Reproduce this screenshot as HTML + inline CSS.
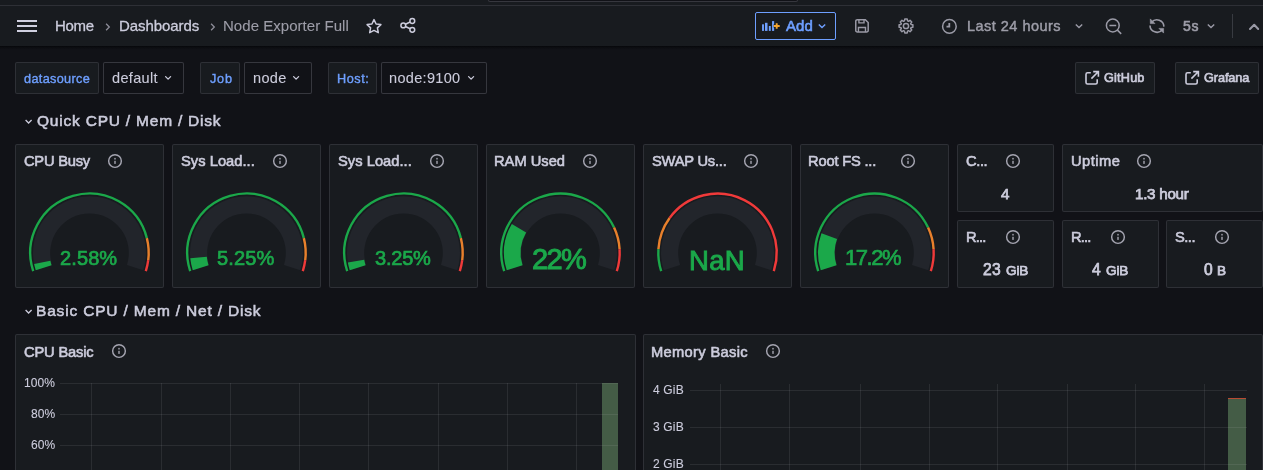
<!DOCTYPE html><html><head><meta charset="utf-8"><style>
*{box-sizing:border-box;margin:0;padding:0}
html,body{width:1263px;height:470px;overflow:hidden;background:#111217;font-family:"Liberation Sans",sans-serif;color:#ccccdc}
.a{position:absolute}
.t{position:absolute;white-space:nowrap;line-height:1;will-change:transform}
</style></head><body>
<div class="a" style="left:0;top:0;width:1263px;height:46px;background:#181b1f"></div>
<div class="a" style="left:0;top:46px;width:1263px;height:4px;background:linear-gradient(#06070a,#0c0d11 40%,#111217)"></div>
<div class="a" style="left:488px;top:-6px;width:310px;height:8px;background:#111217;border:1px solid rgba(204,204,220,0.2);border-radius:2px"></div>
<div class="a" style="left:0;top:5px;width:1263px;height:1px;background:rgba(204,204,220,0.12)"></div>
<div class="a" style="left:17px;top:20px;width:20px;height:2px;background:#d0d0e0"></div>
<div class="a" style="left:17px;top:25px;width:20px;height:2px;background:#d0d0e0"></div>
<div class="a" style="left:17px;top:30px;width:20px;height:2px;background:#d0d0e0"></div>
<div class="t" id="home" style="left:54.96px;top:17.80px;font-size:15px;letter-spacing:-0.320px;color:#ccccdc;font-weight:normal;-webkit-text-stroke:0.3px #ccccdc;">Home</div>
<div class="t" id="dash" style="left:118.62px;top:18.30px;font-size:15px;letter-spacing:-0.079px;color:#ccccdc;font-weight:normal;-webkit-text-stroke:0.3px #ccccdc;">Dashboards</div>
<div class="t" id="nef" style="left:222.62px;top:18.30px;font-size:15px;letter-spacing:0.039px;color:#9d9da8;font-weight:normal;-webkit-text-stroke:0.1px #9d9da8;">Node Exporter Full</div>
<svg class="a" style="left:103.5px;top:22px" width="8" height="10" viewBox="0 0 8 10"><path d="M2.1 1.8L5.3 5L2.1 8.2" stroke="#8e8e9a" stroke-width="1.3" fill="none"/></svg>
<svg class="a" style="left:208.5px;top:22px" width="8" height="10" viewBox="0 0 8 10"><path d="M2.1 1.8L5.3 5L2.1 8.2" stroke="#8e8e9a" stroke-width="1.3" fill="none"/></svg>
<svg class="a" style="left:365px;top:18px" width="18" height="17" viewBox="0 0 18 17"><path d="M9 1.6L11.1 6L15.9 6.6L12.4 9.9L13.3 14.7L9 12.4L4.7 14.7L5.6 9.9L2.1 6.6L6.9 6Z" stroke="#ccccdc" stroke-width="1.5" fill="none" stroke-linejoin="round"/></svg>
<svg class="a" style="left:398.9px;top:16.9px" width="18" height="17" viewBox="0 0 18 17"><circle cx="13.3" cy="4" r="2.4" stroke="#ccccdc" stroke-width="1.5" fill="none"/><circle cx="4.3" cy="8.4" r="2.4" stroke="#ccccdc" stroke-width="1.5" fill="none"/><circle cx="13.3" cy="12.8" r="2.4" stroke="#ccccdc" stroke-width="1.5" fill="none"/><path d="M6.4 7.3L11.2 5M6.4 9.5L11.2 11.8" stroke="#ccccdc" stroke-width="1.5"/></svg>
<div class="a" style="left:755px;top:12px;width:81px;height:28px;border:1px solid #6e9fff;border-radius:2px"></div>
<svg class="a" style="left:761px;top:19px" width="20" height="14" viewBox="0 0 20 14"><rect x="1.05" y="5.3" width="1.9" height="6.6" fill="#6e9fff"/><rect x="4.0" y="3.8" width="2.5" height="8.1" fill="#6e9fff"/><rect x="7.85" y="7" width="1.9" height="4.9" fill="#6e9fff"/><rect x="11.05" y="2.1" width="2.1" height="9.8" fill="#6e9fff"/><path d="M15.7 4.2V9.8M12.7 7H18.7" stroke="#181b1f" stroke-width="3.4"/><path d="M15.7 4.2V9.8M12.7 7H18.7" stroke="#f5a530" stroke-width="1.9"/></svg>
<div class="t" id="add" style="left:786.00px;top:18.30px;font-size:15px;letter-spacing:0.050px;color:#6e9fff;font-weight:normal;-webkit-text-stroke:0.6px #6e9fff;">Add</div>
<svg class="a" style="left:817px;top:22px" width="10" height="8" viewBox="0 0 10 8"><path d="M1.8 2.4L5 5.6L8.2 2.4" stroke="#6e9fff" stroke-width="1.4" fill="none"/></svg>
<svg class="a" style="left:854px;top:18.3px" width="16.7" height="15.8" viewBox="0 0 18 17"><path d="M3.6 1.8H12.2L15.3 4.9V13.4A1.7 1.7 0 0 1 13.6 15.1H3.6A1.7 1.7 0 0 1 1.9 13.4V3.5A1.7 1.7 0 0 1 3.6 1.8Z" stroke="#9a9aa6" stroke-width="1.6" fill="none"/><path d="M5.3 1.8V5.2H10.8V1.8M4.8 15.1V10.2H12.4V15.1" stroke="#9a9aa6" stroke-width="1.5" fill="none"/></svg>
<svg class="a" style="left:897px;top:17px" width="18" height="18" viewBox="0 0 18 18"><path d="M15.89 7.78 L15.89 10.22 L14.07 10.55 L13.68 11.49 L14.73 13.02 L13.02 14.73 L11.49 13.68 L10.55 14.07 L10.22 15.89 L7.78 15.89 L7.45 14.07 L6.51 13.68 L4.98 14.73 L3.27 13.02 L4.32 11.49 L3.93 10.55 L2.11 10.22 L2.11 7.78 L3.93 7.45 L4.32 6.51 L3.27 4.98 L4.98 3.27 L6.51 4.32 L7.45 3.93 L7.78 2.11 L10.22 2.11 L10.55 3.93 L11.49 4.32 L13.02 3.27 L14.73 4.98 L13.68 6.51 L14.07 7.45Z" stroke="#9a9aa6" stroke-width="1.5" fill="none" stroke-linejoin="round"/><circle cx="9" cy="9" r="2.6" stroke="#9a9aa6" stroke-width="1.5" fill="none"/></svg>
<svg class="a" style="left:941.2px;top:17.9px" width="17" height="17" viewBox="0 0 17 17"><circle cx="8.4" cy="8.4" r="6.8" stroke="#9a9aa6" stroke-width="1.5" fill="none"/><path d="M8.3 4.9V8.7H5.5" stroke="#9a9aa6" stroke-width="1.8" fill="none"/></svg>
<div class="t" id="last" style="left:966.98px;top:18.63px;font-size:14.5px;letter-spacing:0.475px;color:#9d9da8;font-weight:normal;-webkit-text-stroke:0.45px #9d9da8;">Last 24 hours</div>
<svg class="a" style="left:1074px;top:22px" width="10" height="8" viewBox="0 0 10 8"><path d="M1.8 2.4L5 5.6L8.2 2.4" stroke="#9a9aa6" stroke-width="1.4" fill="none"/></svg>
<svg class="a" style="left:1104.5px;top:17.5px" width="18" height="17" viewBox="0 0 18 17"><circle cx="7.8" cy="7.5" r="6.4" stroke="#9a9aa6" stroke-width="1.5" fill="none"/><path d="M12.4 12.1L16.2 15.9M4.4 7.5H11.2" stroke="#9a9aa6" stroke-width="1.5"/></svg>
<svg class="a" style="left:1148px;top:18px" width="18" height="17" viewBox="0 0 18 17"><path d="M3.6 4.3A7 7 0 0 1 15.93 8.61M14.4 11.7A7 7 0 0 1 2.0 7.4" stroke="#9a9aa6" stroke-width="1.6" fill="none"/><path d="M2.3 0.9V5.6H7Z M15.6 15.1V10.4H10.9Z" fill="#9a9aa6" stroke="#9a9aa6" stroke-width="0.6" stroke-linejoin="round"/></svg>
<div class="t" id="5s" style="left:1182.83px;top:18.75px;font-size:14px;letter-spacing:0.710px;color:#9d9da8;font-weight:normal;-webkit-text-stroke:0.6px #9d9da8;">5s</div>
<svg class="a" style="left:1206px;top:22px" width="10" height="8" viewBox="0 0 10 8"><path d="M1.8 2.4L5 5.6L8.2 2.4" stroke="#9a9aa6" stroke-width="1.4" fill="none"/></svg>
<div class="a" style="left:1232px;top:14px;width:1px;height:24px;background:rgba(204,204,220,0.18)"></div>
<svg class="a" style="left:1245px;top:20px" width="18" height="14" viewBox="0 0 18 14"><path d="M5 9L9.2 4.8L13.2 9" stroke="#9a9aa6" stroke-width="2" fill="none" stroke-linecap="round" stroke-linejoin="round"/></svg>
<div class="a" style="left:15px;top:62px;width:84px;height:32px;background:#181b1f;border:1px solid rgba(204,204,220,0.12);border-radius:2px"></div>
<div class="t" id="ds" style="left:24.17px;top:72.65px;font-size:12.7px;letter-spacing:0.331px;color:#6e9fff;font-weight:normal;-webkit-text-stroke:0.4px #6e9fff;">datasource</div>
<div class="a" style="left:103px;top:62px;width:81px;height:32px;background:#111217;border:1px solid rgba(204,204,220,0.2);border-radius:2px"></div>
<div class="t" id="def" style="left:112.49px;top:70.53px;font-size:14.5px;letter-spacing:0.323px;color:#ccccdc;font-weight:normal;-webkit-text-stroke:0.1px #ccccdc;">default</div>
<svg class="a" style="left:164.2px;top:75px" width="9" height="6" viewBox="0 0 9 6"><path d="M1.6 1.6L4.1 4.1L6.6 1.6" stroke="#ccccdc" stroke-width="1.3" fill="none" stroke-linecap="round" stroke-linejoin="round"/></svg>
<div class="a" style="left:200px;top:62px;width:40px;height:32px;background:#181b1f;border:1px solid rgba(204,204,220,0.12);border-radius:2px"></div>
<div class="t" id="job" style="left:209.68px;top:72.65px;font-size:12.7px;letter-spacing:0.760px;color:#6e9fff;font-weight:normal;-webkit-text-stroke:0.4px #6e9fff;">Job</div>
<div class="a" style="left:244px;top:62px;width:68px;height:32px;background:#111217;border:1px solid rgba(204,204,220,0.2);border-radius:2px"></div>
<div class="t" id="node" style="left:252.96px;top:70.83px;font-size:14.5px;letter-spacing:0.313px;color:#ccccdc;font-weight:normal;-webkit-text-stroke:0.1px #ccccdc;">node</div>
<svg class="a" style="left:291.8px;top:75px" width="9" height="6" viewBox="0 0 9 6"><path d="M1.6 1.6L4.1 4.1L6.6 1.6" stroke="#ccccdc" stroke-width="1.3" fill="none" stroke-linecap="round" stroke-linejoin="round"/></svg>
<div class="a" style="left:328px;top:62px;width:49px;height:32px;background:#181b1f;border:1px solid rgba(204,204,220,0.12);border-radius:2px"></div>
<div class="t" id="host" style="left:336.81px;top:72.65px;font-size:12.7px;letter-spacing:0.560px;color:#6e9fff;font-weight:normal;-webkit-text-stroke:0.4px #6e9fff;">Host:</div>
<div class="a" style="left:381px;top:62px;width:106px;height:32px;background:#111217;border:1px solid rgba(204,204,220,0.2);border-radius:2px"></div>
<div class="t" id="node9" style="left:389.45px;top:70.83px;font-size:14.5px;letter-spacing:0.330px;color:#ccccdc;font-weight:normal;-webkit-text-stroke:0.1px #ccccdc;">node:9100</div>
<svg class="a" style="left:467.2px;top:75px" width="9" height="6" viewBox="0 0 9 6"><path d="M1.6 1.6L4.1 4.1L6.6 1.6" stroke="#ccccdc" stroke-width="1.3" fill="none" stroke-linecap="round" stroke-linejoin="round"/></svg>
<div class="a" style="left:1075px;top:62px;width:80px;height:32px;background:#181b1f;border:1px solid rgba(204,204,220,0.12);border-radius:2px"></div>
<svg class="a" style="left:1084px;top:70px" width="16" height="16" viewBox="0 0 16 16"><path d="M6.8 2.8H3.6A1.6 1.6 0 0 0 2 4.4V12.4A1.6 1.6 0 0 0 3.6 14H11.6A1.6 1.6 0 0 0 13.2 12.4V9.2" stroke="#ccccdc" stroke-width="1.6" fill="none"/><path d="M9.2 1.6H14.4V6.8M14.2 1.8L7.4 8.6" stroke="#ccccdc" stroke-width="1.6" fill="none"/></svg>
<div class="t" id="gh" style="left:1104.34px;top:71.85px;font-size:12.7px;letter-spacing:0.188px;color:#ccccdc;font-weight:normal;-webkit-text-stroke:0.65px #ccccdc;">GitHub</div>
<div class="a" style="left:1175px;top:62px;width:84px;height:32px;background:#181b1f;border:1px solid rgba(204,204,220,0.12);border-radius:2px"></div>
<svg class="a" style="left:1184px;top:70px" width="16" height="16" viewBox="0 0 16 16"><path d="M6.8 2.8H3.6A1.6 1.6 0 0 0 2 4.4V12.4A1.6 1.6 0 0 0 3.6 14H11.6A1.6 1.6 0 0 0 13.2 12.4V9.2" stroke="#ccccdc" stroke-width="1.6" fill="none"/><path d="M9.2 1.6H14.4V6.8M14.2 1.8L7.4 8.6" stroke="#ccccdc" stroke-width="1.6" fill="none"/></svg>
<div class="t" id="gf" style="left:1203.90px;top:71.85px;font-size:12.7px;letter-spacing:-0.075px;color:#ccccdc;font-weight:normal;-webkit-text-stroke:0.65px #ccccdc;">Grafana</div>
<svg class="a" style="left:23.8px;top:117.5px" width="10" height="8" viewBox="0 0 10 8"><path d="M1.6 2L4.6 5L7.6 2" stroke="#ccccdc" stroke-width="1.3" fill="none"/></svg>
<div class="t" id="row1" style="left:37.15px;top:113.48px;font-size:15.5px;letter-spacing:0.788px;color:#ccccdc;font-weight:normal;-webkit-text-stroke:0.55px #ccccdc;">Quick CPU / Mem / Disk</div>
<svg class="a" style="left:23.8px;top:307.5px" width="10" height="8" viewBox="0 0 10 8"><path d="M1.6 2L4.6 5L7.6 2" stroke="#ccccdc" stroke-width="1.3" fill="none"/></svg>
<div class="t" id="row2" style="left:36.45px;top:303.48px;font-size:15.5px;letter-spacing:0.823px;color:#ccccdc;font-weight:normal;-webkit-text-stroke:0.55px #ccccdc;">Basic CPU / Mem / Net / Disk</div>
<div class="a" style="left:15px;top:144px;width:149px;height:144px;background:#181b1f;border:1px solid rgba(204,204,220,0.12);border-radius:2px"></div>
<div class="t" id="g1t" style="left:24.15px;top:153.56px;font-size:14.7px;letter-spacing:-0.236px;color:#ccccdc;font-weight:normal;-webkit-text-stroke:0.6px #ccccdc;">CPU Busy</div>
<svg class="a" style="left:107px;top:153px" width="16" height="16" viewBox="0 0 16 16"><circle cx="8" cy="8" r="6.35" stroke="#a5a5b1" stroke-width="1.45" fill="none"/><rect x="7.3" y="7.8" width="1.4" height="3.1" fill="#a5a5b1"/><rect x="7.3" y="4.9" width="1.4" height="1.6" fill="#a5a5b1"/></svg>
<svg class="a" style="left:14px;top:143px" width="151" height="146" viewBox="0 0 151 146"><path d="M19.20 128.09A59.2 59.2 0 1 1 132.84 95.08" stroke="#1ba84a" stroke-width="2.4" fill="none"/><path d="M132.84 95.08A59.2 59.2 0 0 1 134.23 117.22" stroke="#e8802c" stroke-width="2.4" fill="none"/><path d="M134.23 117.22A59.2 59.2 0 0 1 131.80 128.09" stroke="#f03a3a" stroke-width="2.4" fill="none"/><path d="M21.77 127.26A56.5 56.5 0 1 1 129.23 127.26L112.88 121.94A39.3 39.3 0 1 0 38.12 121.94Z" fill="#22252b"/><path d="M21.77 127.26A56.5 56.5 0 0 1 20.12 120.99L36.39 117.71A39.9 39.9 0 0 0 37.55 122.13Z" fill="#1ba84a"/></svg>
<div class="t" id="g1v" style="left:59.96px;top:248.07px;font-size:20px;letter-spacing:0.108px;color:#1ba84a;font-weight:normal;-webkit-text-stroke:0.7px #1ba84a;">2.58%</div>
<div class="a" style="left:172px;top:144px;width:149px;height:144px;background:#181b1f;border:1px solid rgba(204,204,220,0.12);border-radius:2px"></div>
<div class="t" id="g2t" style="left:181.15px;top:153.56px;font-size:14.7px;letter-spacing:0.032px;color:#ccccdc;font-weight:normal;-webkit-text-stroke:0.6px #ccccdc;">Sys Load...</div>
<svg class="a" style="left:272.1px;top:153px" width="16" height="16" viewBox="0 0 16 16"><circle cx="8" cy="8" r="6.35" stroke="#a5a5b1" stroke-width="1.45" fill="none"/><rect x="7.3" y="7.8" width="1.4" height="3.1" fill="#a5a5b1"/><rect x="7.3" y="4.9" width="1.4" height="1.6" fill="#a5a5b1"/></svg>
<svg class="a" style="left:171px;top:143px" width="151" height="146" viewBox="0 0 151 146"><path d="M19.20 128.09A59.2 59.2 0 1 1 132.84 95.08" stroke="#1ba84a" stroke-width="2.4" fill="none"/><path d="M132.84 95.08A59.2 59.2 0 0 1 134.23 117.22" stroke="#e8802c" stroke-width="2.4" fill="none"/><path d="M134.23 117.22A59.2 59.2 0 0 1 131.80 128.09" stroke="#f03a3a" stroke-width="2.4" fill="none"/><path d="M21.77 127.26A56.5 56.5 0 1 1 129.23 127.26L112.88 121.94A39.3 39.3 0 1 0 38.12 121.94Z" fill="#22252b"/><path d="M21.77 127.26A56.5 56.5 0 0 1 19.28 115.37L35.79 113.74A39.9 39.9 0 0 0 37.55 122.13Z" fill="#1ba84a"/></svg>
<div class="t" id="g2v" style="left:216.87px;top:248.07px;font-size:20px;letter-spacing:0.130px;color:#1ba84a;font-weight:normal;-webkit-text-stroke:0.7px #1ba84a;">5.25%</div>
<div class="a" style="left:329px;top:144px;width:149px;height:144px;background:#181b1f;border:1px solid rgba(204,204,220,0.12);border-radius:2px"></div>
<div class="t" id="g3t" style="left:338.15px;top:153.56px;font-size:14.7px;letter-spacing:0.032px;color:#ccccdc;font-weight:normal;-webkit-text-stroke:0.6px #ccccdc;">Sys Load...</div>
<svg class="a" style="left:429.1px;top:153px" width="16" height="16" viewBox="0 0 16 16"><circle cx="8" cy="8" r="6.35" stroke="#a5a5b1" stroke-width="1.45" fill="none"/><rect x="7.3" y="7.8" width="1.4" height="3.1" fill="#a5a5b1"/><rect x="7.3" y="4.9" width="1.4" height="1.6" fill="#a5a5b1"/></svg>
<svg class="a" style="left:328px;top:143px" width="151" height="146" viewBox="0 0 151 146"><path d="M19.20 128.09A59.2 59.2 0 1 1 132.84 95.08" stroke="#1ba84a" stroke-width="2.4" fill="none"/><path d="M132.84 95.08A59.2 59.2 0 0 1 134.23 117.22" stroke="#e8802c" stroke-width="2.4" fill="none"/><path d="M134.23 117.22A59.2 59.2 0 0 1 131.80 128.09" stroke="#f03a3a" stroke-width="2.4" fill="none"/><path d="M21.77 127.26A56.5 56.5 0 1 1 129.23 127.26L112.88 121.94A39.3 39.3 0 1 0 38.12 121.94Z" fill="#22252b"/><path d="M21.77 127.26A56.5 56.5 0 0 1 19.85 119.59L36.20 116.71A39.9 39.9 0 0 0 37.55 122.13Z" fill="#1ba84a"/></svg>
<div class="t" id="g3v" style="left:375.17px;top:248.07px;font-size:20px;letter-spacing:-0.225px;color:#1ba84a;font-weight:normal;-webkit-text-stroke:0.7px #1ba84a;">3.25%</div>
<div class="a" style="left:486px;top:144px;width:149px;height:144px;background:#181b1f;border:1px solid rgba(204,204,220,0.12);border-radius:2px"></div>
<div class="t" id="g4t" style="left:494.45px;top:153.56px;font-size:14.7px;letter-spacing:-0.001px;color:#ccccdc;font-weight:normal;-webkit-text-stroke:0.6px #ccccdc;">RAM Used</div>
<svg class="a" style="left:582px;top:153px" width="16" height="16" viewBox="0 0 16 16"><circle cx="8" cy="8" r="6.35" stroke="#a5a5b1" stroke-width="1.45" fill="none"/><rect x="7.3" y="7.8" width="1.4" height="3.1" fill="#a5a5b1"/><rect x="7.3" y="4.9" width="1.4" height="1.6" fill="#a5a5b1"/></svg>
<svg class="a" style="left:485px;top:143px" width="151" height="146" viewBox="0 0 151 146"><path d="M19.20 128.09A59.2 59.2 0 0 1 129.07 84.59" stroke="#1ba84a" stroke-width="2.4" fill="none"/><path d="M129.07 84.59A59.2 59.2 0 0 1 134.58 106.08" stroke="#e8802c" stroke-width="2.4" fill="none"/><path d="M134.58 106.08A59.2 59.2 0 0 1 131.80 128.09" stroke="#f03a3a" stroke-width="2.4" fill="none"/><path d="M21.77 127.26A56.5 56.5 0 1 1 129.23 127.26L112.88 121.94A39.3 39.3 0 1 0 38.12 121.94Z" fill="#22252b"/><path d="M21.77 127.26A56.5 56.5 0 0 1 26.83 81.11L41.13 89.54A39.9 39.9 0 0 0 37.55 122.13Z" fill="#1ba84a"/></svg>
<div class="t" id="g4v" style="left:531.80px;top:244.65px;font-size:29px;letter-spacing:-1.605px;color:#1ba84a;font-weight:normal;-webkit-text-stroke:0.95px #1ba84a;">22%</div>
<div class="a" style="left:643px;top:144px;width:149px;height:144px;background:#181b1f;border:1px solid rgba(204,204,220,0.12);border-radius:2px"></div>
<div class="t" id="g5t" style="left:652.15px;top:153.56px;font-size:14.7px;letter-spacing:-0.214px;color:#ccccdc;font-weight:normal;-webkit-text-stroke:0.6px #ccccdc;">SWAP Us...</div>
<svg class="a" style="left:742.8px;top:153px" width="16" height="16" viewBox="0 0 16 16"><circle cx="8" cy="8" r="6.35" stroke="#a5a5b1" stroke-width="1.45" fill="none"/><rect x="7.3" y="7.8" width="1.4" height="3.1" fill="#a5a5b1"/><rect x="7.3" y="4.9" width="1.4" height="1.6" fill="#a5a5b1"/></svg>
<svg class="a" style="left:642px;top:143px" width="151" height="146" viewBox="0 0 151 146"><path d="M19.20 128.09A59.2 59.2 0 0 1 16.42 106.08" stroke="#1ba84a" stroke-width="2.4" fill="none"/><path d="M16.42 106.08A59.2 59.2 0 0 1 27.61 75.00" stroke="#e8802c" stroke-width="2.4" fill="none"/><path d="M27.61 75.00A59.2 59.2 0 0 1 131.80 128.09" stroke="#f03a3a" stroke-width="2.4" fill="none"/><path d="M21.77 127.26A56.5 56.5 0 1 1 129.23 127.26L112.88 121.94A39.3 39.3 0 1 0 38.12 121.94Z" fill="#22252b"/></svg>
<div class="t" id="g5v" style="left:689.16px;top:246.52px;font-size:27.5px;letter-spacing:0.340px;color:#1ba84a;font-weight:normal;-webkit-text-stroke:0.95px #1ba84a;">NaN</div>
<div class="a" style="left:800px;top:144px;width:149px;height:144px;background:#181b1f;border:1px solid rgba(204,204,220,0.12);border-radius:2px"></div>
<div class="t" id="g6t" style="left:808.45px;top:153.56px;font-size:14.7px;letter-spacing:-0.185px;color:#ccccdc;font-weight:normal;-webkit-text-stroke:0.6px #ccccdc;">Root FS ...</div>
<svg class="a" style="left:899.8px;top:153px" width="16" height="16" viewBox="0 0 16 16"><circle cx="8" cy="8" r="6.35" stroke="#a5a5b1" stroke-width="1.45" fill="none"/><rect x="7.3" y="7.8" width="1.4" height="3.1" fill="#a5a5b1"/><rect x="7.3" y="4.9" width="1.4" height="1.6" fill="#a5a5b1"/></svg>
<svg class="a" style="left:799px;top:143px" width="151" height="146" viewBox="0 0 151 146"><path d="M19.20 128.09A59.2 59.2 0 0 1 129.07 84.59" stroke="#1ba84a" stroke-width="2.4" fill="none"/><path d="M129.07 84.59A59.2 59.2 0 0 1 134.58 106.08" stroke="#e8802c" stroke-width="2.4" fill="none"/><path d="M134.58 106.08A59.2 59.2 0 0 1 131.80 128.09" stroke="#f03a3a" stroke-width="2.4" fill="none"/><path d="M21.77 127.26A56.5 56.5 0 1 1 129.23 127.26L112.88 121.94A39.3 39.3 0 1 0 38.12 121.94Z" fill="#22252b"/><path d="M21.77 127.26A56.5 56.5 0 0 1 22.46 90.34L38.04 96.05A39.9 39.9 0 0 0 37.55 122.13Z" fill="#1ba84a"/></svg>
<div class="t" id="g6v" style="left:844.86px;top:247.28px;font-size:22px;letter-spacing:-1.472px;color:#1ba84a;font-weight:normal;-webkit-text-stroke:0.7px #1ba84a;">17.2%</div>
<div class="a" style="left:957px;top:144px;width:97px;height:68px;background:#181b1f;border:1px solid rgba(204,204,220,0.12);border-radius:2px"></div>
<div class="t" id="s1t" style="left:966.32px;top:153.56px;font-size:14.7px;letter-spacing:-0.383px;color:#ccccdc;font-weight:normal;-webkit-text-stroke:0.6px #ccccdc;">C...</div>
<svg class="a" style="left:1004.9px;top:153px" width="16" height="16" viewBox="0 0 16 16"><circle cx="8" cy="8" r="6.35" stroke="#a5a5b1" stroke-width="1.45" fill="none"/><rect x="7.3" y="7.8" width="1.4" height="3.1" fill="#a5a5b1"/><rect x="7.3" y="4.9" width="1.4" height="1.6" fill="#a5a5b1"/></svg>
<div class="t" id="s1v" style="left:1000.97px;top:186.33px;font-size:15.2px;letter-spacing:0.000px;color:#ccccdc;font-weight:normal;-webkit-text-stroke:0.75px #ccccdc;">4</div>
<div class="a" style="left:1062px;top:144px;width:201px;height:68px;background:#181b1f;border:1px solid rgba(204,204,220,0.12);border-radius:2px"></div>
<div class="t" id="s2t" style="left:1070.81px;top:153.56px;font-size:14.7px;letter-spacing:0.498px;color:#ccccdc;font-weight:normal;-webkit-text-stroke:0.6px #ccccdc;">Uptime</div>
<svg class="a" style="left:1135.9px;top:153px" width="16" height="16" viewBox="0 0 16 16"><circle cx="8" cy="8" r="6.35" stroke="#a5a5b1" stroke-width="1.45" fill="none"/><rect x="7.3" y="7.8" width="1.4" height="3.1" fill="#a5a5b1"/><rect x="7.3" y="4.9" width="1.4" height="1.6" fill="#a5a5b1"/></svg>
<div class="t" id="s2v" style="left:1135.13px;top:186.13px;font-size:15.2px;letter-spacing:-0.279px;color:#ccccdc;font-weight:normal;-webkit-text-stroke:0.75px #ccccdc;">1.3 hour</div>
<div class="a" style="left:957px;top:220px;width:97px;height:68px;background:#181b1f;border:1px solid rgba(204,204,220,0.12);border-radius:2px"></div>
<div class="t" id="s3t" style="left:965.98px;top:229.56px;font-size:14.7px;letter-spacing:-0.823px;color:#ccccdc;font-weight:normal;-webkit-text-stroke:0.6px #ccccdc;">R...</div>
<svg class="a" style="left:1005.1px;top:229px" width="16" height="16" viewBox="0 0 16 16"><circle cx="8" cy="8" r="6.35" stroke="#a5a5b1" stroke-width="1.45" fill="none"/><rect x="7.3" y="7.8" width="1.4" height="3.1" fill="#a5a5b1"/><rect x="7.3" y="4.9" width="1.4" height="1.6" fill="#a5a5b1"/></svg>
<div class="t" id="s3v" style="left:982.83px;top:261.89px;font-size:15.6px;letter-spacing:0.250px;color:#ccccdc;font-weight:normal;-webkit-text-stroke:0.75px #ccccdc;">23</div>
<div class="t" id="s3u" style="left:1005.60px;top:263.59px;font-size:13.6px;letter-spacing:-0.125px;color:#ccccdc;font-weight:normal;-webkit-text-stroke:0.75px #ccccdc;">GiB</div>
<div class="a" style="left:1062px;top:220px;width:97px;height:68px;background:#181b1f;border:1px solid rgba(204,204,220,0.12);border-radius:2px"></div>
<div class="t" id="s4t" style="left:1070.62px;top:229.56px;font-size:14.7px;letter-spacing:-0.823px;color:#ccccdc;font-weight:normal;-webkit-text-stroke:0.6px #ccccdc;">R...</div>
<svg class="a" style="left:1110.1px;top:229px" width="16" height="16" viewBox="0 0 16 16"><circle cx="8" cy="8" r="6.35" stroke="#a5a5b1" stroke-width="1.45" fill="none"/><rect x="7.3" y="7.8" width="1.4" height="3.1" fill="#a5a5b1"/><rect x="7.3" y="4.9" width="1.4" height="1.6" fill="#a5a5b1"/></svg>
<div class="t" id="s4v" style="left:1092.49px;top:261.89px;font-size:15.6px;letter-spacing:0.000px;color:#ccccdc;font-weight:normal;-webkit-text-stroke:0.75px #ccccdc;">4</div>
<div class="t" id="s4u" style="left:1106.00px;top:263.59px;font-size:13.6px;letter-spacing:-0.125px;color:#ccccdc;font-weight:normal;-webkit-text-stroke:0.75px #ccccdc;">GiB</div>
<div class="a" style="left:1166px;top:220px;width:97px;height:68px;background:#181b1f;border:1px solid rgba(204,204,220,0.12);border-radius:2px"></div>
<div class="t" id="s5t" style="left:1175.17px;top:229.56px;font-size:14.7px;letter-spacing:-0.513px;color:#ccccdc;font-weight:normal;-webkit-text-stroke:0.6px #ccccdc;">S...</div>
<svg class="a" style="left:1214.1px;top:229px" width="16" height="16" viewBox="0 0 16 16"><circle cx="8" cy="8" r="6.35" stroke="#a5a5b1" stroke-width="1.45" fill="none"/><rect x="7.3" y="7.8" width="1.4" height="3.1" fill="#a5a5b1"/><rect x="7.3" y="4.9" width="1.4" height="1.6" fill="#a5a5b1"/></svg>
<div class="t" id="s5v" style="left:1203.70px;top:261.89px;font-size:15.6px;letter-spacing:0.000px;color:#ccccdc;font-weight:normal;-webkit-text-stroke:0.75px #ccccdc;">0</div>
<div class="t" id="s5u" style="left:1217.30px;top:263.59px;font-size:13.6px;letter-spacing:0.000px;color:#ccccdc;font-weight:normal;-webkit-text-stroke:0.75px #ccccdc;">B</div>
<div class="a" style="left:15px;top:334px;width:621px;height:150px;background:#181b1f;border:1px solid rgba(204,204,220,0.12);border-radius:2px"></div>
<div class="t" id="cbt" style="left:24.32px;top:344.56px;font-size:14.7px;letter-spacing:-0.171px;color:#ccccdc;font-weight:normal;-webkit-text-stroke:0.6px #ccccdc;">CPU Basic</div>
<svg class="a" style="left:111px;top:343px" width="16" height="16" viewBox="0 0 16 16"><circle cx="8" cy="8" r="6.35" stroke="#a5a5b1" stroke-width="1.45" fill="none"/><rect x="7.3" y="7.8" width="1.4" height="3.1" fill="#a5a5b1"/><rect x="7.3" y="4.9" width="1.4" height="1.6" fill="#a5a5b1"/></svg>
<div class="a" style="left:601.5px;top:383px;width:16.5px;height:90px;background:#445c46"></div>
<div class="a" style="left:60px;top:383px;width:558px;height:1px;background:rgba(204,204,220,0.1)"></div>
<div class="a" style="left:60px;top:414px;width:558px;height:1px;background:rgba(204,204,220,0.1)"></div>
<div class="a" style="left:60px;top:445px;width:558px;height:1px;background:rgba(204,204,220,0.1)"></div>
<div class="a" style="left:91px;top:383px;width:1px;height:90px;background:rgba(204,204,220,0.1)"></div>
<div class="a" style="left:161px;top:383px;width:1px;height:90px;background:rgba(204,204,220,0.1)"></div>
<div class="a" style="left:230px;top:383px;width:1px;height:90px;background:rgba(204,204,220,0.1)"></div>
<div class="a" style="left:299px;top:383px;width:1px;height:90px;background:rgba(204,204,220,0.1)"></div>
<div class="a" style="left:368px;top:383px;width:1px;height:90px;background:rgba(204,204,220,0.1)"></div>
<div class="a" style="left:438px;top:383px;width:1px;height:90px;background:rgba(204,204,220,0.1)"></div>
<div class="a" style="left:507px;top:383px;width:1px;height:90px;background:rgba(204,204,220,0.1)"></div>
<div class="a" style="left:576px;top:383px;width:1px;height:90px;background:rgba(204,204,220,0.1)"></div>
<div class="t" id="y1" style="left:23.83px;top:376.84px;font-size:12px;letter-spacing:0.050px;color:#ccccdc;font-weight:normal;-webkit-text-stroke:0.1px #ccccdc;">100%</div>
<div class="t" id="y2" style="left:30.51px;top:408.14px;font-size:12px;letter-spacing:0.085px;color:#ccccdc;font-weight:normal;-webkit-text-stroke:0.1px #ccccdc;">80%</div>
<div class="t" id="y3" style="left:30.51px;top:438.94px;font-size:12px;letter-spacing:0.085px;color:#ccccdc;font-weight:normal;-webkit-text-stroke:0.1px #ccccdc;">60%</div>
<div class="a" style="left:643px;top:334px;width:620px;height:150px;background:#181b1f;border:1px solid rgba(204,204,220,0.12);border-radius:2px"></div>
<div class="t" id="mbt" style="left:651.30px;top:344.56px;font-size:14.7px;letter-spacing:0.327px;color:#ccccdc;font-weight:normal;-webkit-text-stroke:0.6px #ccccdc;">Memory Basic</div>
<svg class="a" style="left:765px;top:343px" width="16" height="16" viewBox="0 0 16 16"><circle cx="8" cy="8" r="6.35" stroke="#a5a5b1" stroke-width="1.45" fill="none"/><rect x="7.3" y="7.8" width="1.4" height="3.1" fill="#a5a5b1"/><rect x="7.3" y="4.9" width="1.4" height="1.6" fill="#a5a5b1"/></svg>
<div class="a" style="left:1228px;top:397.5px;width:18px;height:90px;background:#445c46;border-top:1.5px solid #b84a33"></div>
<div class="a" style="left:689.5px;top:390px;width:557px;height:1px;background:rgba(204,204,220,0.1)"></div>
<div class="a" style="left:689.5px;top:427px;width:557px;height:1px;background:rgba(204,204,220,0.1)"></div>
<div class="a" style="left:689.5px;top:464px;width:557px;height:1px;background:rgba(204,204,220,0.1)"></div>
<div class="a" style="left:720px;top:384px;width:1px;height:90px;background:rgba(204,204,220,0.1)"></div>
<div class="a" style="left:789px;top:384px;width:1px;height:90px;background:rgba(204,204,220,0.1)"></div>
<div class="a" style="left:859.5px;top:384px;width:1px;height:90px;background:rgba(204,204,220,0.1)"></div>
<div class="a" style="left:928.5px;top:384px;width:1px;height:90px;background:rgba(204,204,220,0.1)"></div>
<div class="a" style="left:997px;top:384px;width:1px;height:90px;background:rgba(204,204,220,0.1)"></div>
<div class="a" style="left:1066.5px;top:384px;width:1px;height:90px;background:rgba(204,204,220,0.1)"></div>
<div class="a" style="left:1135px;top:384px;width:1px;height:90px;background:rgba(204,204,220,0.1)"></div>
<div class="a" style="left:1204px;top:384px;width:1px;height:90px;background:rgba(204,204,220,0.1)"></div>
<div class="t" id="m1" style="left:652.83px;top:384.34px;font-size:12px;letter-spacing:0.165px;color:#ccccdc;font-weight:normal;-webkit-text-stroke:0.1px #ccccdc;">4 GiB</div>
<div class="t" id="m2" style="left:652.83px;top:421.14px;font-size:12px;letter-spacing:0.165px;color:#ccccdc;font-weight:normal;-webkit-text-stroke:0.1px #ccccdc;">3 GiB</div>
<div class="t" id="m3" style="left:652.83px;top:457.74px;font-size:12px;letter-spacing:0.165px;color:#ccccdc;font-weight:normal;-webkit-text-stroke:0.1px #ccccdc;">2 GiB</div>
</body></html>
